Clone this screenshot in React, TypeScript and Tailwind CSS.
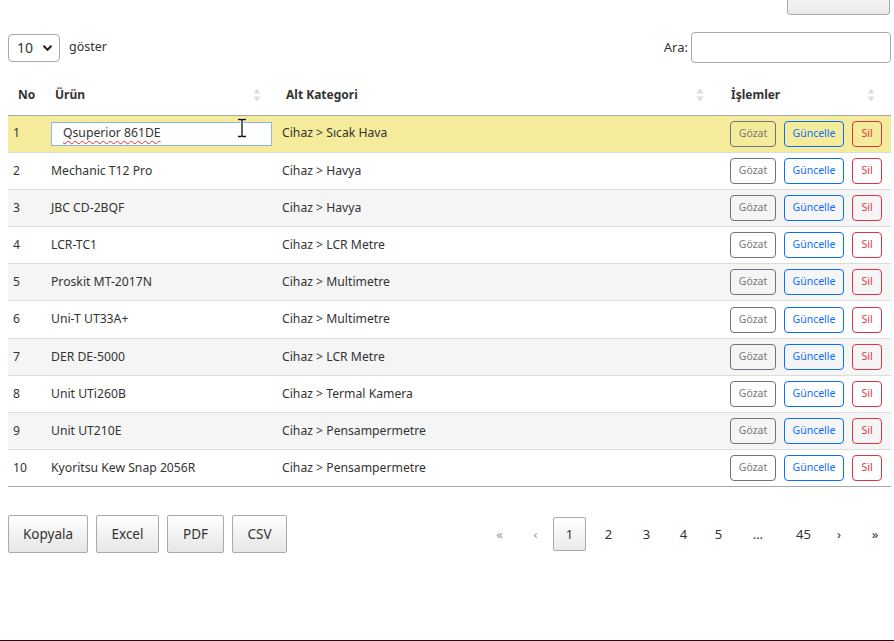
import React from "react";

const rows = [
  ["1", "Qsuperior 861DE", "Cihaz > Sıcak Hava"],
  ["2", "Mechanic T12 Pro", "Cihaz > Havya"],
  ["3", "JBC CD-2BQF", "Cihaz > Havya"],
  ["4", "LCR-TC1", "Cihaz > LCR Metre"],
  ["5", "Proskit MT-2017N", "Cihaz > Multimetre"],
  ["6", "Uni-T UT33A+", "Cihaz > Multimetre"],
  ["7", "DER DE-5000", "Cihaz > LCR Metre"],
  ["8", "Unit UTi260B", "Cihaz > Termal Kamera"],
  ["9", "Unit UT210E", "Cihaz > Pensampermetre"],
  ["10", "Kyoritsu Kew Snap 2056R", "Cihaz > Pensampermetre"],
];

function SortIcon() {
  return (
    <svg width="8" height="14" viewBox="0 0 8 14" className="absolute right-[16px] top-1/2 -translate-y-1/2">
      <path d="M4 0.5 L7.5 5.5 L0.5 5.5 Z" fill="#dcdcdc" />
      <path d="M4 13.5 L7.5 8.5 L0.5 8.5 Z" fill="#dcdcdc" />
    </svg>
  );
}

function IBeam() {
  const d = "M2 1.5 H5 Q6 1.5 6 3 V17 Q6 18.5 5 18.5 H2 M10 1.5 H7 Q6 1.5 6 3 M6 17 Q6 18.5 7 18.5 H10";
  return (
    <svg width="12" height="20" viewBox="0 0 12 20" className="absolute left-[184px] top-[-5px]">
      <path d={d} stroke="#fff" strokeWidth="3" fill="none" />
      <path d={d} stroke="#111" strokeWidth="1.3" fill="none" />
    </svg>
  );
}

const pages: [string, string, boolean][] = [
  ["«", "w-[37px]", true],
  ["‹", "w-[35px]", true],
  ["1", "w-[33px]", false],
  ["2", "w-[39px] ml-[3px]", false],
  ["3", "w-[37px]", false],
  ["4", "w-[37px]", false],
  ["5", "w-[33px]", false],
  ["…", "w-[46px]", false],
  ["45", "w-[45px]", false],
  ["›", "w-[26px]", false],
  ["»", "w-[46px]", false],
];

export default function App() {
  const font = { fontFamily: '"Noto Sans", "Open Sans", sans-serif' };
  return (
    <div className="relative h-[641px] w-[894px] overflow-hidden bg-white text-[#333]" style={font}>
      <div className="flex h-[15px] items-end justify-end overflow-hidden pr-[4px]">
        <div className="h-[30px] w-[103px] rounded-[3px] border border-[#aaa] bg-gradient-to-b from-white to-[#e9e9e9]" />
      </div>

      <div className="mt-[17px] flex items-center justify-between pl-2 pr-[3px]">
        <div className="flex items-center gap-[9px]">
          <div className="flex h-[28px] w-[52px] items-center justify-between rounded-[4px] border border-[#aaa] pl-[8px] pr-[6px] text-[14px]">
            <span>10</span>
            <svg width="11" height="8" viewBox="0 0 11 8">
              <path d="M1.5 1.8 L5.5 5.8 L9.5 1.8" stroke="#222" strokeWidth="2" fill="none" />
            </svg>
          </div>
          <span className="text-[12.5px]">göster</span>
        </div>
        <div className="flex items-center gap-[3px]">
          <span className="text-[13px]">Ara:</span>
          <div className="h-[31px] w-[200px] rounded-[4px] border border-[#aaa] bg-white" />
        </div>
      </div>

      <div className="mt-[13px] pl-2 pr-[3px]">
        <table className="w-[883px] table-fixed border-collapse text-[12.2px]">
          <colgroup>
            <col className="w-[38px]" />
            <col className="w-[231px]" />
            <col className="w-[443px]" />
            <col className="w-[171px]" />
          </colgroup>
          <thead>
            <tr className="h-[39px] border-b border-[#a8a8a8] text-[12px]">
              <th className="pl-[10px] text-left font-bold">No</th>
              <th className="relative pl-[9px] text-left font-bold">
                Ürün
                <SortIcon />
              </th>
              <th className="relative pl-[9px] text-left font-bold">
                Alt Kategori
                <SortIcon />
              </th>
              <th className="relative pl-[11px] text-left font-bold">
                İşlemler
                <SortIcon />
              </th>
            </tr>
          </thead>
          <tbody>
            {rows.map((r, i) => {
              const last = i === rows.length - 1;
              const bg = i === 0 ? "bg-[#f5ec9b]" : i % 2 === 0 ? "bg-[#f5f5f5]" : "bg-white";
              return (
                <tr
                  key={r[0]}
                  className={`h-[37.2px] ${bg} ${last ? "border-b border-[#a8a8a8]" : "border-b border-[#dcdcdc]"}`}
                >
                  <td className="pl-[5px]">{r[0]}</td>
                  <td className="pl-[5px]">
                    {i === 0 ? (
                      <div className="relative flex h-[24px] w-[221px] items-center border border-[#8ab4f8] bg-white pl-[11px]">
                        <span className="underline decoration-[#e0312b] decoration-wavy decoration-[1px] underline-offset-[3px]">
                          Qsuperior 861DE
                        </span>
                        <IBeam />
                      </div>
                    ) : (
                      r[1]
                    )}
                  </td>
                  <td className="pl-[5px]">{r[2]}</td>
                  <td className="pl-[10px]">
                    <div className="flex items-center gap-2 text-[10.5px]">
                      <span className="flex h-[26px] w-[46px] items-center justify-center rounded-[4px] border border-[#6c757d] text-[#777]">
                        Gözat
                      </span>
                      <span className="flex h-[26px] w-[60px] items-center justify-center rounded-[4px] border border-[#0d6efd] text-[#0d6efd]">
                        Güncelle
                      </span>
                      <span className="flex h-[26px] w-[30px] items-center justify-center rounded-[4px] border border-[#dc3545] text-[#dc3545]">
                        Sil
                      </span>
                    </div>
                  </td>
                </tr>
              );
            })}
          </tbody>
        </table>
      </div>

      <div className="mt-[28px] flex items-center justify-between pl-2 pr-[3px]">
        <div className="flex gap-2 text-[13.5px]">
          {[
            ["Kopyala", "w-[80px]"],
            ["Excel", "w-[63px]"],
            ["PDF", "w-[57px]"],
            ["CSV", "w-[55px]"],
          ].map(([t, w]) => (
            <div
              key={t}
              className={`flex h-[38px] ${w} items-center justify-center rounded-[2px] border border-[#aaa] bg-gradient-to-b from-white to-[#e6e6e6]`}
            >
              {t}
            </div>
          ))}
        </div>
        <div className="mr-[-7px] flex items-center text-[13px]">
          {pages.map(([t, w, dim], i) => {
            const active = t === "1";
            return (
              <div
                key={i}
                className={`flex h-[34px] ${w} items-center justify-center ${
                  active
                    ? "rounded-[2px] border border-[#aaa] bg-gradient-to-b from-white to-[#eaeaea]"
                    : ""
                } ${dim ? "text-[#999]" : "text-[#333]"}`}
              >
                {t}
              </div>
            );
          })}
        </div>
      </div>

      <div className="absolute bottom-0 left-0 h-[1px] w-full bg-[#2b0a16]" />
    </div>
  );
}
